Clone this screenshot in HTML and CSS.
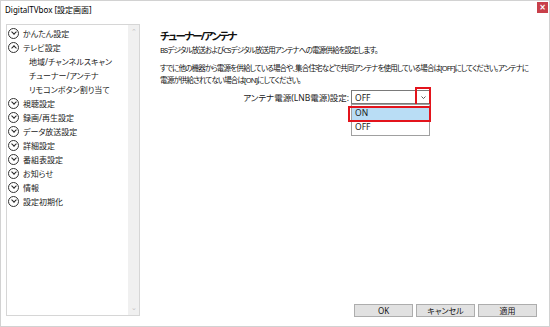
FILE: index.html
```html
<!DOCTYPE html>
<html lang="ja">
<head>
  <meta charset="UTF-8">
  <title>DigitalTVbox [設定画面]</title>
  <link rel="stylesheet" href="styles.css">
</head>
<body>
  <div class="window">
    <!-- タイトルバー -->
    <div class="titlebar">
      <span class="title">DigitalTVbox [設定画面]</span>
      <span class="close">×</span>
    </div>

    <div class="main">
      <!-- 左のツリー -->
      <div class="tree">
        <ul class="tree-list">
          <li class="tree-item"><span class="toggle down"></span>かんたん設定</li>
          <li class="tree-item"><span class="toggle up"></span>テレビ設定</li>
          <li class="tree-item child">地域/チャンネルスキャン</li>
          <li class="tree-item child">チューナー/アンテナ</li>
          <li class="tree-item child">リモコンボタン割り当て</li>
          <li class="tree-item"><span class="toggle down"></span>視聴設定</li>
          <li class="tree-item"><span class="toggle down"></span>録画/再生設定</li>
          <li class="tree-item"><span class="toggle down"></span>データ放送設定</li>
          <li class="tree-item"><span class="toggle down"></span>詳細設定</li>
          <li class="tree-item"><span class="toggle down"></span>番組表設定</li>
          <li class="tree-item"><span class="toggle down"></span>お知らせ</li>
          <li class="tree-item"><span class="toggle down"></span>情報</li>
          <li class="tree-item"><span class="toggle down"></span>設定初期化</li>
        </ul>
        <div class="scrollbar">
          <span class="sb-arrow">&#8963;</span>
          <span class="sb-arrow">&#8964;</span>
        </div>
      </div>

      <!-- 設定パネル -->
      <div class="panel">
        <h1>チューナー/アンテナ</h1>
        <p class="desc">BSデジタル放送およびCSデジタル放送用アンテナへの電源供給を設定します。</p>
        <p class="desc second">すでに他の機器から電源を供給している場合や、集合住宅などで共同アンテナを使用している場合は[OFF]にしてください。アンテナに<br>電源が供給されてない場合は[ON]にしてください。</p>

        <div class="field">
          <label class="field-label">アンテナ電源(LNB電源)設定:</label>
          <div class="select">
            <span class="select-value">OFF</span>
            <span class="select-arrow">
              <svg width="5" height="3" viewBox="0 0 5 3"><path d="M0.5 0.5 L2.5 2.5 L4.5 0.5" fill="none" stroke="#333" stroke-width="0.8"/></svg>
            </span>
            <span class="mark mark-arrow"></span>
            <ul class="options">
              <li class="option selected">ON</li>
              <li class="option">OFF</li>
            </ul>
            <span class="mark mark-on"></span>
          </div>
        </div>

        <div class="buttons">
          <button class="btn">OK</button>
          <button class="btn">キャンセル</button>
          <button class="btn">適用</button>
        </div>
      </div>
    </div>
  </div>
</body>
</html>
```

FILE: styles.css
```css
/* === BASE === */
* {
  box-sizing: border-box;
}
body {
  margin: 0;
  font-family: "Noto Sans", "Noto Sans CJK JP", sans-serif;
  font-feature-settings: "palt";
  font-size: 8px;
  color: #1a1a1a;
  background: #fff;
}

/* === WINDOW === */
.window {
  width: 550px;
  height: 327px;
  border: 1px solid #d2d2d2;
  display: flex;
  flex-direction: column;
  background: #fff;
}
.titlebar {
  height: 23px;
  flex: none;
  display: flex;
  align-items: flex-start;
  justify-content: space-between;
  padding: 0 1px 0 4px;
}
.title {
  margin-top: 4px;
  line-height: 10px;
  font-size: 8px;
  color: #000;
}
.close {
  width: 11px;
  height: 11px;
  margin-top: 1px;
  background: #c8404a;
  color: #fff;
  font-family: "DejaVu Sans", sans-serif;
  font-size: 8px;
  font-weight: bold;
  line-height: 11px;
  text-align: center;
}

.main {
  flex: 1;
  display: flex;
  min-height: 0;
  padding: 0 0 9px 5px;
}

/* === TREE === */
.tree {
  width: 134px;
  flex: none;
  border: 1px solid #d6d6d6;
  display: flex;
  margin-bottom: 1px;
}
.tree-list {
  flex: 1;
  list-style: none;
  margin: 0;
  padding: 1px 0 0 1px;
}
.tree-item {
  height: 14px;
  display: flex;
  align-items: center;
  gap: 4px;
  white-space: nowrap;
}
.tree-item.child {
  padding-left: 21px;
}
.toggle {
  width: 11px;
  height: 11px;
  border: 1px solid #333;
  border-radius: 50%;
  position: relative;
  flex: none;
}
.toggle::after {
  content: "";
  position: absolute;
  left: 3px;
  width: 3px;
  height: 3px;
  border-right: 1px solid #222;
  border-bottom: 1px solid #222;
}
.toggle.down::after {
  top: 1.5px;
  transform: rotate(45deg);
}
.toggle.up::after {
  top: 3.5px;
  transform: rotate(-135deg);
}
.scrollbar {
  width: 11px;
  background: #f0f0f0;
  display: flex;
  flex-direction: column;
  justify-content: space-between;
  align-items: center;
  color: #c2c2c2;
  font-size: 7px;
  line-height: 10px;
  padding: 2px 0;
}

/* === PANEL === */
.panel {
  flex: 1;
  min-width: 0;
  display: flex;
  flex-direction: column;
  padding: 5px 12px 0 20px;
}
.panel h1 {
  margin: 0;
  font-size: 10.5px;
  letter-spacing: -1.6px;
  line-height: 14px;
  font-weight: bold;
  color: #111;
}
.desc {
  margin: 1.5px 0 0;
  font-size: 7.5px;
  letter-spacing: -0.85px;
  line-height: 11px;
  white-space: nowrap;
  color: #111;
}
.desc.second {
  margin-top: 6.5px;
  line-height: 12px;
}

.field {
  display: flex;
  align-items: center;
  margin-top: 4px;
}
.field-label {
  width: 191px;
  text-align: right;
  padding-right: 2px;
  font-size: 8.5px;
}
.select {
  position: relative;
  width: 79px;
  height: 14px;
  border: 1px solid #7a7a7a;
  display: flex;
  align-items: center;
  justify-content: space-between;
  padding-left: 3px;
}
.select-value {
  font-size: 8.5px;
}
.select-arrow {
  width: 12px;
  height: 12px;
  display: flex;
  align-items: center;
  justify-content: center;
}
.options {
  position: absolute;
  top: 13px;
  left: -1px;
  width: 79px;
  margin: 0;
  padding: 1px 0;
  list-style: none;
  background: #fff;
  border: 1px solid #a0a0a0;
}
.option {
  height: 14px;
  line-height: 14px;
  padding-left: 3px;
  font-size: 8.5px;
}
.option.selected {
  background: #b9ddf5;
}
.mark {
  position: absolute;
  border: 2px solid #e3141c;
}
.mark-arrow {
  top: -4px;
  right: -2px;
  width: 16px;
  height: 19px;
}
.mark-on {
  top: 15px;
  left: -4px;
  width: 83px;
  height: 16px;
}

/* === BUTTONS === */
.buttons {
  margin-top: auto;
  display: flex;
  justify-content: flex-end;
  gap: 3px;
}
.btn {
  width: 59px;
  height: 13px;
  padding: 0;
  border: 1px solid #adadad;
  background: #e1e1e1;
  font-family: inherit;
  font-feature-settings: "palt";
  font-size: 8px;
  line-height: 11px;
  color: #111;
}
```
